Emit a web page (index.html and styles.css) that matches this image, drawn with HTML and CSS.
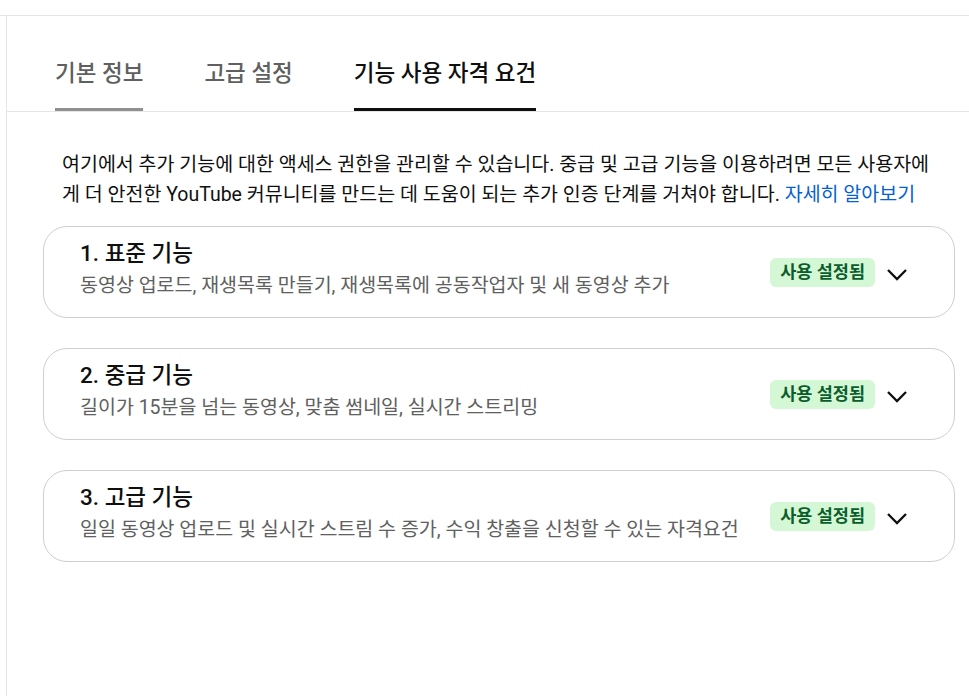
FILE: index.html
```html
<!DOCTYPE html>
<html lang="ko">
<head>
<meta charset="utf-8">
<link rel="stylesheet" href="styles.css">
</head>
<body>
<div class="frame">
  <div class="panel">
    <nav class="tabs">
      <div class="tab tab-hover">기본 정보</div>
      <div class="tab">고급 설정</div>
      <div class="tab tab-active">기능 사용 자격 요건</div>
    </nav>
    <p class="desc">여기에서 추가 기능에 대한 액세스 권한을 관리할 수 있습니다. 중급 및 고급 기능을 이용하려면 모든 사용자에게 더 안전한 YouTube 커뮤니티를 만드는 데 도움이 되는 추가 인증 단계를 거쳐야 합니다. <a class="link" href="#">자세히 알아보기</a></p>
    <div class="cards">
      <div class="card">
        <div class="card-text">
          <div class="card-title">1. 표준 기능</div>
          <div class="card-sub">동영상 업로드, 재생목록 만들기, 재생목록에 공동작업자 및 새 동영상 추가</div>
        </div>
        <span class="badge">사용 설정됨</span>
        <svg class="chev" viewBox="0 0 24 24" width="24" height="24"><polyline points="3,8 12,17 21,8" fill="none" stroke="#0f0f0f" stroke-width="2.3"/></svg>
      </div>
      <div class="card">
        <div class="card-text">
          <div class="card-title">2. 중급 기능</div>
          <div class="card-sub">길이가 15분을 넘는 동영상, 맞춤 썸네일, 실시간 스트리밍</div>
        </div>
        <span class="badge">사용 설정됨</span>
        <svg class="chev" viewBox="0 0 24 24" width="24" height="24"><polyline points="3,8 12,17 21,8" fill="none" stroke="#0f0f0f" stroke-width="2.3"/></svg>
      </div>
      <div class="card">
        <div class="card-text">
          <div class="card-title">3. 고급 기능</div>
          <div class="card-sub">일일 동영상 업로드 및 실시간 스트림 수 증가, 수익 창출을 신청할 수 있는 자격요건</div>
        </div>
        <span class="badge">사용 설정됨</span>
        <svg class="chev" viewBox="0 0 24 24" width="24" height="24"><polyline points="3,8 12,17 21,8" fill="none" stroke="#0f0f0f" stroke-width="2.3"/></svg>
      </div>
    </div>
  </div>
</div>
</body>
</html>
```

FILE: styles.css
```css
html, body {
  margin: 0;
  padding: 0;
  background: #ffffff;
  height: 100%;
}
body {
  font-family: Roboto, "Noto Sans CJK KR", "Noto Sans", sans-serif;
  color: #0f0f0f;
  overflow: hidden;
}
.frame {
  margin-top: 15px;
  border-top: 1px solid #e5e5e5;
  height: calc(100% - 16px);
}
.panel {
  margin-left: 6px;
  border-left: 1px solid #e5e5e5;
  height: 100%;
}
.tabs {
  display: flex;
  gap: 61px;
  padding: 42px 0 0 48px;
  border-bottom: 1px solid #e5e5e5;
}
.tab {
  font-size: 22.5px;
  line-height: 30px;
  padding-bottom: 20px;
  border-bottom: 3px solid transparent;
  color: #606060;
  font-weight: 500;
}
.tab-hover {
  border-bottom-color: #909090;
}
.tab-active {
  color: #0f0f0f;
  border-bottom-color: #0f0f0f;
}
.desc {
  margin: 38px 30px 16px 55px;
  font-size: 19.5px;
  line-height: 30px;
  color: #0f0f0f;
}
.link {
  color: #065fd4;
  text-decoration: none;
}
.cards {
  display: flex;
  flex-direction: column;
  gap: 30px;
  margin: 0 14px 0 36px;
}
.card {
  display: flex;
  align-items: center;
  border: 1px solid #cfcfcf;
  border-radius: 24px;
  padding: 12px 45px 19px 36px;
}
.card-text {
  flex: 1;
}
.card-title {
  font-size: 22.5px;
  line-height: 28px;
  font-weight: 500;
  color: #0f0f0f;
}
.card-sub {
  margin-top: 7px;
  font-size: 19.5px;
  line-height: 24px;
  color: #606060;
}
.badge {
  background: #d4f7d6;
  color: #0b5e2b;
  font-size: 17.5px;
  font-weight: 700;
  line-height: 29px;
  padding: 0 10px;
  border-radius: 6px;
  margin-top: 7px;
}
.chev {
  margin-left: 10px;
  margin-top: 10px;
  display: block;
}
```
